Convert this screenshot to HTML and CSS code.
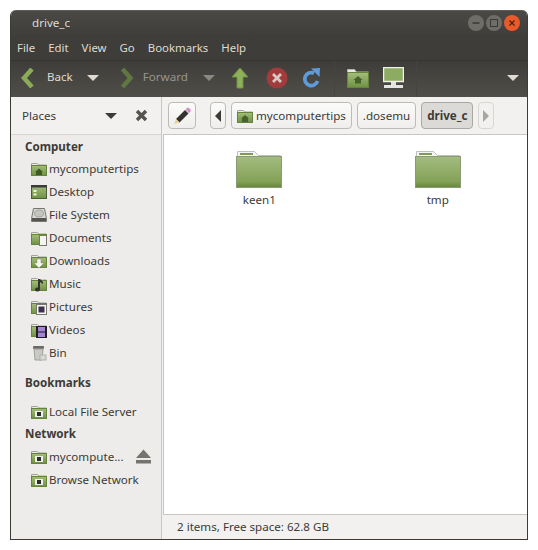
FILE: index.html
```html
<!DOCTYPE html>
<html lang="en">
<head>
  <meta charset="UTF-8">
  <title>drive_c</title>
  <link rel="stylesheet" href="styles.css">
</head>
<body>
  <svg class="defs" width="0" height="0">
    <defs>
      <linearGradient id="fold" x1="0" y1="0" x2="0" y2="1">
        <stop offset="0" stop-color="#a4bd7c"/>
        <stop offset="1" stop-color="#6f9141"/>
      </linearGradient>
      <linearGradient id="bigfold" x1="0" y1="0" x2="0" y2="1">
        <stop offset="0" stop-color="#a3bc80"/>
        <stop offset="0.8" stop-color="#84a258"/>
        <stop offset="1" stop-color="#66863c"/>
      </linearGradient>
      <symbol id="folder" viewBox="0 0 16 16">
        <path d="M.5 2.500h6L8 4h7.500v3H.5z" fill="#e8e8e4" stroke="#a5a5a0"/>
        <rect x=".5" y="4.500" width="15" height="10" fill="url(#fold)" stroke="#66823f"/>
      </symbol>
      <symbol id="net" viewBox="0 0 16 16">
        <use href="#folder" width="16" height="16"/>
        <rect x="4" y="7" width="8" height="6" fill="#f0f0ec"/>
        <rect x="6" y="8" width="4" height="4" fill="#2c2c2c"/>
      </symbol>
    </defs>
  </svg>

  <div class="window">
    <div class="titlebar">
      <span class="title">drive_c</span>
      <div class="wm-buttons">
        <span class="wm-btn">
          <svg width="16" height="16" viewBox="0 0 16 16"><path d="M4.500 8h7" stroke="#3a3935" stroke-width="1.400"/></svg>
        </span>
        <span class="wm-btn">
          <svg width="16" height="16" viewBox="0 0 16 16"><rect x="4.500" y="4.500" width="7" height="7" fill="none" stroke="#3a3935"/></svg>
        </span>
        <span class="wm-btn wm-close">
          <svg width="16" height="16" viewBox="0 0 16 16"><path d="M5.500 5.500l5 5M10.500 5.500l-5 5" stroke="#4a2410" stroke-width="1.300"/></svg>
        </span>
      </div>
    </div>

    <div class="menubar">
      <span>File</span><span>Edit</span><span>View</span><span>Go</span><span>Bookmarks</span><span>Help</span>
    </div>

    <div class="toolbar">
      <svg class="tb-back" width="14" height="20" viewBox="0 0 14 20"><path d="M11 1L3 10l8 9" fill="none" stroke="#8cab58" stroke-width="4.500"/></svg>
      <span class="tb-label tb-label-back">Back</span>
      <span class="tri tri-back"></span>
      <svg class="tb-fwd" width="13" height="20" viewBox="0 0 13 20"><path d="M2.500 1l8 9-8 9" fill="none" stroke="#5f7740" stroke-width="4.500"/></svg>
      <span class="tb-label tb-label-fwd">Forward</span>
      <span class="tri tri-fwd"></span>
      <svg class="tb-up" width="18" height="22" viewBox="0 0 18 22"><path d="M9 1L1 10h5v11h6V10h5z" fill="#8fb05a" stroke="#6f9040"/></svg>
      <svg class="tb-stop" width="22" height="22" viewBox="0 0 22 22"><circle cx="11" cy="11" r="10.500" fill="#a23b3b"/><path d="M7 7l8 8M15 7l-8 8" stroke="#d8c8c4" stroke-width="2.800"/></svg>
      <svg class="tb-reload" width="20" height="22" viewBox="0 0 20 22"><path d="M13 6.200A6.500 6.500 0 1 0 16.500 14" fill="none" stroke="#5f9bd8" stroke-width="3.800"/><path d="M10 1.500l9-.5-.5 9z" fill="#5f9bd8"/></svg>
      <span class="tb-sep tb-sep-one"></span>
      <svg class="tb-home" width="22" height="20" viewBox="0 0 22 20"><path d="M.5 1.500h7l2 2.500h12v3H.5z" fill="#e8e8e4" stroke="#b5b5b0"/><rect x=".5" y="4.500" width="21" height="15" fill="url(#fold)" stroke="#66823f"/><path d="M11 8l4.500 4H14v3.500H8V12H6.500z" fill="#47622a"/></svg>
      <svg class="tb-monitor" width="21" height="22" viewBox="0 0 21 22"><rect x=".5" y=".5" width="20" height="14" fill="#8eab62" stroke="#f0f0ec" stroke-width="1.500"/><rect x="8" y="15" width="5" height="3" fill="#e4e4e0"/><rect x="1" y="18" width="19" height="3" fill="#e4e4e0"/></svg>
      <span class="tb-sep tb-sep-two"></span>
      <span class="tri tri-more"></span>
    </div>

    <div class="main">
      <div class="sidebar">
        <div class="places-head">
          <span class="places-title">Places</span>
          <span class="tri tri-places"></span>
          <svg class="places-close" width="13" height="13" viewBox="0 0 13 13"><path d="M2 2l9 9M11 2l-9 9" stroke="#55534e" stroke-width="3.400"/></svg>
        </div>
        <div class="places-list">
          <div class="side-heading side-heading-computer">Computer</div>
          <div class="side-item">
            <svg class="ico" width="16" height="16"><use href="#folder"/><path d="M8 7.500l4 3.500h-1v3H5v-3H4z" fill="#3f5a24"/></svg>mycomputertips
          </div>
          <div class="side-item">
            <svg class="ico" width="16" height="16" viewBox="0 0 16 16"><rect x=".5" y="1.500" width="15" height="13" fill="url(#fold)" stroke="#4d5c38"/><rect x="0" y="1" width="16" height="2.500" fill="#3b3b38"/><rect x="2.500" y="6" width="3" height="2" fill="#f0f0ec"/><rect x="2.500" y="9.500" width="3" height="2" fill="#f0f0ec"/></svg>Desktop
          </div>
          <div class="side-item">
            <svg class="ico" width="16" height="16" viewBox="0 0 16 16"><path d="M2.500 1.500h11l2 10v3H.5v-3z" fill="#d8d8d4" stroke="#77776f"/><ellipse cx="8" cy="6.500" rx="4.500" ry="3.500" fill="#c4c4c0" stroke="#a4a4a0"/><rect x="1" y="11" width="14" height="3" fill="#56564f"/></svg>File System
          </div>
          <div class="side-item">
            <svg class="ico" width="16" height="16"><use href="#folder"/><rect x="8.500" y="5.500" width="7" height="10" fill="#f4f4f0" stroke="#77776f"/></svg>Documents
          </div>
          <div class="side-item">
            <svg class="ico" width="16" height="16"><use href="#folder"/><path d="M6 6h4v4h3l-5 5-5-5h3z" fill="#f6f6f2" stroke="#888880" stroke-width=".5"/></svg>Downloads
          </div>
          <div class="side-item">
            <svg class="ico" width="16" height="16"><use href="#folder"/><path d="M7 3h2l3 3v2L9 6v7.500a2.500 2 0 1 1-2-2z" fill="#33332f"/></svg>Music
          </div>
          <div class="side-item">
            <svg class="ico" width="16" height="16"><use href="#folder"/><rect x="5.500" y="5.500" width="10" height="10" fill="#f6f6f2" stroke="#77776f"/><rect x="7.500" y="7.500" width="6" height="6" fill="#3d2f4d"/></svg>Pictures
          </div>
          <div class="side-item">
            <svg class="ico" width="16" height="16"><use href="#folder"/><rect x="5" y="4" width="11" height="12" fill="#1f1f1d"/><rect x="7" y="5" width="7" height="4.500" fill="#a484d4"/><rect x="7" y="10.500" width="7" height="4.500" fill="#a484d4"/></svg>Videos
          </div>
          <div class="side-item">
            <svg class="ico" width="16" height="16" viewBox="0 0 16 16"><rect x="2" y="1" width="11" height="3" rx="1" fill="#6b6b65"/><path d="M3 4h9l-1 11H4z" fill="#c8c8c4" stroke="#a0a09a"/><rect x="9" y="10" width="6" height="5" fill="#d8d8d4" stroke="#b0b0aa"/></svg>Bin
          </div>
          <div class="side-heading side-heading-books">Bookmarks</div>
          <div class="side-item side-item-server">
            <svg class="ico" width="16" height="16"><use href="#net"/></svg>Local File Server
          </div>
          <div class="side-heading side-heading-net">Network</div>
          <div class="side-item side-item-net">
            <svg class="ico" width="16" height="16"><use href="#net"/></svg>mycompute...
            <svg class="eject" width="15" height="15" viewBox="0 0 15 15"><path d="M7.500 .5L15 9H0z" fill="#75746e"/><rect x="0" y="11" width="15" height="3.500" fill="#75746e"/></svg>
          </div>
          <div class="side-item">
            <svg class="ico" width="16" height="16"><use href="#net"/></svg>Browse Network
          </div>
        </div>
      </div>

      <div class="content">
        <div class="pathbar">
          <span class="btn btn-edit">
            <svg width="20" height="20" viewBox="0 0 20 20"><path d="M4 13L13 4l3.500 3.500-9 9z" fill="#33322e"/><path d="M13.500 3.500l1.500-1.500q1-.8 2 0l1.500 1.500q.8 1 0 2L17 7z" fill="#d58fc8"/><path d="M4 13l3.500 3.500L2 18z" fill="#e6d49a"/></svg>
          </span>
          <span class="btn btn-arrow btn-left"><span class="arrow-left"></span></span>
          <span class="btn crumb crumb-home">
            <svg width="16" height="16"><use href="#folder"/><path d="M8 7l4 3.500h-1v3.500H5v-3.500H4z" fill="#47622a"/></svg>mycomputertips
          </span>
          <span class="btn crumb crumb-dosemu">.dosemu</span>
          <span class="btn crumb crumb-current">drive_c</span>
          <span class="btn btn-arrow btn-right"><span class="arrow-right"></span></span>
        </div>
        <div class="files">
          <div class="file">
            <svg width="46" height="38" viewBox="0 0 46 38"><path d="M1.500 1.500h17l4 4h22v8h-43z" fill="#f4f4f0" stroke="#c0c0bb"/><rect x="4" y="3" width="13" height="2" fill="#7f9d52"/><rect x=".5" y="6.500" width="45" height="31" fill="url(#bigfold)" stroke="#8a9a75"/></svg>
            <span class="file-name">keen1</span>
          </div>
          <div class="file">
            <svg width="46" height="38" viewBox="0 0 46 38"><path d="M1.500 1.500h17l4 4h22v8h-43z" fill="#f4f4f0" stroke="#c0c0bb"/><rect x="4" y="3" width="13" height="2" fill="#7f9d52"/><rect x=".5" y="6.500" width="45" height="31" fill="url(#bigfold)" stroke="#8a9a75"/></svg>
            <span class="file-name">tmp</span>
          </div>
        </div>
        <div class="statusbar">2 items, Free space: 62.8 GB</div>
      </div>
    </div>
  </div>
</body>
</html>
```

FILE: styles.css
```css
* {
  box-sizing: border-box;
}

body {
  margin: 0;
  padding: 10px;
  background-color: #fff;
  font-family: "Noto Sans", "Open Sans", sans-serif;
  font-size: 11.6px;
  color: #3c3b37;
}

.defs {
  display: block;
  height: 0;
}

.window {
  width: 518px;
  height: 530px;
  display: flex;
  flex-direction: column;
  border: 1px solid #3c3b37;
  border-top: 0;
  border-radius: 6px 6px 0 0;
  overflow: hidden;
  background-color: #f2f1f0;
}

/* title bar */
.titlebar {
  height: 25px;
  display: flex;
  align-items: center;
  justify-content: space-between;
  padding: 0 7px 0 21px;
  background: linear-gradient(#4a4945, #3f3e3a);
  border-top: 1px solid #5c5b56;
  color: #dfdbd2;
}

.title {
  padding-bottom: 2px;
}

.wm-buttons {
  display: flex;
  gap: 2px;
}

.wm-btn {
  width: 16px;
  height: 16px;
  border-radius: 50%;
  background-color: #6e6d68;
}

.wm-btn svg {
  display: block;
}

.wm-close {
  background-color: #e9592a;
}

/* menus */
.menubar {
  height: 25px;
  display: flex;
  align-items: center;
  gap: 13px;
  padding: 0 0 1px 6px;
  background-color: #3e3d39;
  color: #dfdbd2;
  font-size: 11.4px;
}

.toolbar {
  height: 37px;
  display: flex;
  align-items: center;
  padding-bottom: 3px;
  background: linear-gradient(#3e3d39, #4f4e49);
  border-top: 1px solid #353430;
  color: #dfdbd2;
}

.tb-label { padding-bottom: 2px; }
.tb-back { margin-left: 10px; }
.tb-label-back { margin-left: 12px; }
.tb-fwd { margin-left: 21px; }
.tb-label-fwd { margin-left: 10px; color: #97958d; }
.tb-up { margin-left: 16px; }
.tb-stop { margin-left: 17px; }
.tb-reload { margin-left: 13px; }
.tb-home { margin-left: 12px; }
.tb-monitor { margin-left: 14px; }
.tb-sep { width: 1px; height: 36px; margin-bottom: -3px; background-color: #45443f; }
.tb-sep-one { margin-left: 13px; }
.tb-sep-two { margin-left: 12px; }

.tri {
  width: 0;
  height: 0;
  border-left: 6px solid transparent;
  border-right: 6px solid transparent;
  border-top: 6px solid #dfdbd2;
}

.tri-back { margin-left: 14px; }
.tri-fwd { margin-left: 15px; border-top-color: #8a8880; }
.tri-more { margin-left: 90px; }

/* main area */
.main {
  flex: 1;
  display: flex;
  min-height: 0;
}

.sidebar {
  width: 151px;
  background-color: #edecea;
  border-right: 1px solid #c8c6c2;
}

.places-head {
  height: 37px;
  display: flex;
  align-items: center;
  padding-left: 11px;
  background-color: #f2f1f0;
}

.places-title {
  width: 83px;
}

.tri-places {
  border-top-color: #3c3b37;
}

.places-close {
  margin-left: 18px;
}

.places-list {
  border-top: 1px solid #d8d6d3;
  height: 406px;
}

.side-heading {
  height: 23px;
  line-height: 23px;
  padding-left: 14px;
  font-weight: 700;
}

.side-heading-computer {
  height: 22px;
}

.side-heading-books {
  margin-top: 7px;
}

.side-heading-net {
  height: 22px;
  line-height: 22px;
}

.side-item {
  height: 23px;
  display: flex;
  align-items: center;
  gap: 2px;
  padding-left: 20px;
}

.side-item-server {
  margin-top: 6px;
}

.ico {
  flex: none;
}

.eject {
  margin-left: 10px;
}

.content {
  flex: 1;
  display: flex;
  flex-direction: column;
  min-width: 0;
}

.pathbar {
  height: 37px;
  display: flex;
  align-items: center;
  padding-left: 6px;
  gap: 5px;
}

.btn {
  height: 27px;
  display: flex;
  align-items: center;
  justify-content: center;
  border: 1px solid #bdbbb6;
  border-radius: 4px;
  background: linear-gradient(#fbfbfa, #efeeec);
}

.btn-edit {
  width: 28px;
  margin-right: 9px;
}

.btn-arrow {
  width: 16px;
}

.btn-right {
  background: #f2f1f0;
  border-color: #d8d6d3;
}

.arrow-left {
  border-top: 6px solid transparent;
  border-bottom: 6px solid transparent;
  border-right: 6px solid #3c3b37;
}

.arrow-right {
  border-top: 6px solid transparent;
  border-bottom: 6px solid transparent;
  border-left: 6px solid #a8a6a1;
}

.crumb {
  padding: 0 6px;
  gap: 3px;
}

.crumb-home {
  padding: 0 5px;
}

.crumb-dosemu {
  padding: 0 5px;
}

.crumb-current {
  padding: 0 5px;
  font-weight: 700;
  background: #dcdad7;
  border-color: #aaa8a3;
}

.files {
  flex: 1;
  display: flex;
  align-items: flex-start;
  padding: 15px 0 0 6px;
  background-color: #fff;
  border: 1px solid #c8c6c2;
  border-right: 0;
  margin-left: 1px;
}

.file {
  width: 180px;
  display: flex;
  flex-direction: column;
  align-items: center;
  gap: 3px;
}

.file-name {
  line-height: 17px;
}

.statusbar {
  height: 24px;
  line-height: 24px;
  padding-left: 15px;
}
```
